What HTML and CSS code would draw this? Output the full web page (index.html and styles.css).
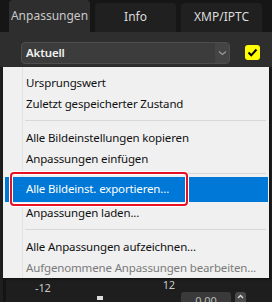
FILE: index.html
```html
<!DOCTYPE html>
<html lang="de">
<head>
    <meta charset="UTF-8">
    <title>Anpassungen</title>
    <link rel="stylesheet" href="styles.css">
</head>
<body>
    <div class="panel">
        <div class="tabs">
            <div class="tab active">Anpassungen</div>
            <div class="tab">Info</div>
            <div class="tab">XMP/IPTC</div>
        </div>

        <div class="toolbar">
            <div class="select">
                <span class="select-label">Aktuell</span>
                <span class="select-arrow">
                    <svg width="9" height="6" viewBox="0 0 9 6"><path d="M1 1.5 L4.5 4.5 L8 1.5" fill="none" stroke="#9a9a9a" stroke-width="1.3"/></svg>
                </span>
            </div>
            <div class="check">
                <svg width="11" height="9" viewBox="0 0 11 9"><path d="M1.5 4.5 L4.2 7.3 L9.5 1.5" fill="none" stroke="#000" stroke-width="2"/></svg>
            </div>
        </div>

        <div class="content">
            <div class="slider-row">
                <span class="tick-min">-12</span>
                <span class="thumb"></span>
                <span class="tick-max">12</span>
                <span class="value-box">0.00</span>
                <span class="spin-up">
                    <svg width="7" height="5" viewBox="0 0 7 5"><path d="M1 4 L3.5 1.5 L6 4" fill="none" stroke="#ddd" stroke-width="1.3"/></svg>
                </span>
            </div>
        </div>

        <div class="menu">
            <div class="menu-item">Ursprungswert</div>
            <div class="menu-item">Zuletzt gespeicherter Zustand</div>
            <div class="menu-sep"></div>
            <div class="menu-item">Alle Bildeinstellungen kopieren</div>
            <div class="menu-item">Anpassungen einfügen</div>
            <div class="menu-sep short"></div>
            <div class="menu-item selected">Alle Bildeinst. exportieren...</div>
            <div class="menu-item">Anpassungen laden...</div>
            <div class="menu-sep"></div>
            <div class="menu-item">Alle Anpassungen aufzeichnen...</div>
            <div class="menu-item disabled">Aufgenommene Anpassungen bearbeiten...</div>
        </div>

        <div class="highlight-box"></div>
    </div>
</body>
</html>
```

FILE: styles.css
```css
body {
    margin: 0;
    background: #1b1b1b;
    font-family: "Noto Sans", "Open Sans", sans-serif;
    font-size: 11.5px;
    letter-spacing: -0.15px;
}
.panel {
    position: relative;
    width: 272px;
    height: 302px;
    overflow: hidden;
    background: #1e1e1e;
}
.tabs {
    display: flex;
    gap: 5px;
    height: 32px;
    padding-left: 9px;
    background: #161616;
    box-sizing: border-box;
    align-items: flex-end;
}
.tab {
    width: 81px;
    height: 29px;
    display: flex;
    align-items: center;
    justify-content: center;
    background: #202020;
    color: #dcdcdc;
    font-size: 12px;
    letter-spacing: 0;
    border-radius: 4px 4px 0 0;
    padding-bottom: 2px;
    box-sizing: border-box;
}
.tab.active {
    height: 32px;
    background: #2e2e2e;
    color: #c9c9c9;
}
.toolbar {
    display: flex;
    align-items: center;
    height: 35px;
    background: #2e2e2e;
    padding: 6px 0 0 21px;
    box-sizing: border-box;
}
.select {
    display: flex;
    width: 209px;
    height: 22px;
    background: #3c3c3c;
    border: 1px solid #4e4e4e;
    border-radius: 4px;
    box-sizing: border-box;
}
.select-label {
    flex: 1;
    padding-left: 4px;
    line-height: 20px;
    color: #f2f2f2;
    font-weight: 600;
}
.select-arrow {
    width: 14px;
    display: flex;
    align-items: center;
    justify-content: center;
    background: #444;
    border-radius: 0 3px 3px 0;
}
.check {
    width: 15px;
    height: 15px;
    margin-left: 15px;
    background: #ffff00;
    border-radius: 3px;
    display: flex;
    align-items: center;
    justify-content: center;
}
.content {
    height: 235px;
    border-left: 3px solid #141414;
    margin-left: 3px;
}
.slider-row {
    display: flex;
    align-items: flex-start;
    padding-top: 210px;
    color: #c8c8c8;
    font-size: 11px;
}
.tick-min {
    margin-left: 29px;
    margin-top: 3px;
}
.thumb {
    width: 6px;
    height: 4px;
    margin: 19px 0 0 46px;
    background: #ddd;
}
.tick-max {
    margin-left: 60px;
}
.value-box {
    width: 50px;
    height: 16px;
    margin: 15px 0 0 6px;
    background: #3a3a3a;
    border-radius: 3px;
    text-align: center;
    line-height: 18px;
    color: #bbb;
}
.spin-up {
    width: 11px;
    height: 12px;
    margin: 15px 0 0 4px;
    background: #4a4a4a;
    border-radius: 3px;
    display: flex;
    justify-content: center;
    padding-top: 2px;
    box-sizing: border-box;
}
.menu {
    position: absolute;
    left: 3px;
    top: 67px;
    width: 266px;
    height: 211px;
    padding: 5px 1px 2px 2px;
    box-sizing: border-box;
    background: #f0f0f0;
    color: #111;
    background-image: linear-gradient(#e2e2e2, #e2e2e2);
    background-size: 1px 100%;
    background-position: 19px 0;
    background-repeat: no-repeat;
    box-shadow: 1px 1px 2px rgba(0, 0, 0, 0.5);
}
.menu-item {
    height: 21px;
    line-height: 21px;
    padding-left: 21px;
    white-space: nowrap;
}
.menu-item.selected {
    height: 25px;
    line-height: 24px;
    background: #0078d7;
    color: #fff;
}
.menu-item.disabled {
    color: #7a7a7a;
}
.menu-sep {
    height: 1px;
    margin: 6px 2px 6px 20px;
    background: #d8d8d8;
}
.menu-sep.short {
    margin: 4px 2px 3px 20px;
}
.highlight-box {
    position: absolute;
    left: 10px;
    top: 172px;
    width: 178px;
    height: 34px;
    border: 2px solid #e81123;
    border-radius: 4px;
    box-sizing: border-box;
    box-shadow: 0 0 0 1px #fff, inset 0 0 0 1px #fff;
}
```
